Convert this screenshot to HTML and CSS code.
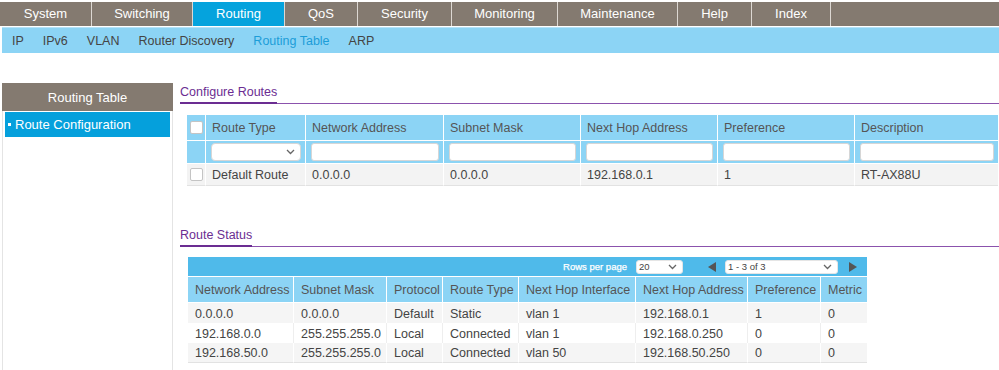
FILE: index.html
```html
<!DOCTYPE html>
<html>
<head>
<meta charset="utf-8">
<link rel="stylesheet" href="styles.css">
</head>
<body>
<div class="topnav">
  <div class="tab w-system">System</div>
  <div class="tab w-switching">Switching</div>
  <div class="tab active w-routing">Routing</div>
  <div class="tab w-qos">QoS</div>
  <div class="tab w-security">Security</div>
  <div class="tab w-monitoring">Monitoring</div>
  <div class="tab w-maint">Maintenance</div>
  <div class="tab w-help">Help</div>
  <div class="tab w-index">Index</div>
  <div class="tab rest"></div>
</div>
<div class="subnav">
  <span>IP</span><span>IPv6</span><span>VLAN</span><span>Router Discovery</span><span class="cur">Routing Table</span><span>ARP</span>
</div>
<div class="main">
  <div class="sidebar">
    <div class="side-head">Routing Table</div>
    <div class="side-item"><span class="dot"></span>Route Configuration</div>
  </div>
  <div class="content">
    <div class="sec-head"><span>Configure Routes</span></div>
    <table class="cfg">
      <colgroup>
        <col style="width:19px"><col style="width:100px"><col style="width:138px"><col style="width:137px"><col style="width:137px"><col style="width:137px"><col>
      </colgroup>
      <tr class="hd">
        <td class="cbc"><span class="cb"></span></td>
        <td>Route Type</td><td>Network Address</td><td>Subnet Mask</td><td>Next Hop Address</td><td>Preference</td><td>Description</td>
      </tr>
      <tr class="flt">
        <td></td>
        <td><div class="inp sel"><svg width="9" height="6" viewBox="0 0 9 6"><polyline points="1,1 4.5,4.5 8,1" fill="none" stroke="#666" stroke-width="1.3"/></svg></div></td>
        <td><div class="inp"></div></td><td><div class="inp"></div></td><td><div class="inp"></div></td><td><div class="inp"></div></td><td><div class="inp"></div></td>
      </tr>
      <tr class="row">
        <td class="cbc"><span class="cb"></span></td>
        <td>Default Route</td><td>0.0.0.0</td><td>0.0.0.0</td><td>192.168.0.1</td><td>1</td><td>RT-AX88U</td>
      </tr>
    </table>

    <div class="sec-head second"><span>Route Status</span></div>
    <div class="status">
      <div class="pager">
        <span class="rpp">Rows per page</span>
        <div class="psel small"><span>20</span><svg width="9" height="6" viewBox="0 0 9 6"><polyline points="1,1 4.5,4.5 8,1" fill="none" stroke="#666" stroke-width="1.3"/></svg></div>
        <svg class="arr left" width="8" height="10" viewBox="0 0 8 10"><polygon points="8,0 0,5 8,10" fill="#555"/></svg>
        <div class="psel big"><span>1 - 3 of 3</span><svg width="9" height="6" viewBox="0 0 9 6"><polyline points="1,1 4.5,4.5 8,1" fill="none" stroke="#666" stroke-width="1.3"/></svg></div>
        <svg class="arr right" width="8" height="10" viewBox="0 0 8 10"><polygon points="0,0 8,5 0,10" fill="#555"/></svg>
      </div>
      <table class="st">
        <colgroup>
          <col style="width:106px"><col style="width:93px"><col style="width:56px"><col style="width:76px"><col style="width:117px"><col style="width:112px"><col style="width:73px"><col style="width:46px">
        </colgroup>
        <tr class="hd">
          <td>Network Address</td><td>Subnet Mask</td><td>Protocol</td><td>Route Type</td><td>Next Hop Interface</td><td>Next Hop Address</td><td>Preference</td><td>Metric</td>
        </tr>
        <tr class="g"><td>0.0.0.0</td><td>0.0.0.0</td><td>Default</td><td>Static</td><td>vlan 1</td><td>192.168.0.1</td><td>1</td><td>0</td></tr>
        <tr class="w"><td>192.168.0.0</td><td>255.255.255.0</td><td>Local</td><td>Connected</td><td>vlan 1</td><td>192.168.0.250</td><td>0</td><td>0</td></tr>
        <tr class="g"><td>192.168.50.0</td><td>255.255.255.0</td><td>Local</td><td>Connected</td><td>vlan 50</td><td>192.168.50.250</td><td>0</td><td>0</td></tr>
      </table>
    </div>
  </div>
</div>
</body>
</html>
```
FILE: styles.css
```css
* { box-sizing: border-box; }
html, body { margin: 0; padding: 0; background: #fff; }
body { font-family: "Liberation Sans", Arial, Helvetica, sans-serif; font-size: 12.5px; color: #444; overflow: hidden; }

.topnav { display: flex; margin-top: 2px; height: 24px; background: #847a70; }
.tab { color: #fff; font-size: 13px; line-height: 24px; text-align: center; border-right: 1px solid #ddd8d3; }
.tab.active { background: #05a3dd; }
.tab.rest { flex: 1; border-right: none; }
.w-system { width: 92px; }
.w-switching { width: 101px; }
.w-routing { width: 92px; }
.w-qos { width: 73px; }
.w-security { width: 94px; }
.w-monitoring { width: 106px; }
.w-maint { width: 120px; }
.w-help { width: 74px; }
.w-index { width: 79px; }

.subnav { margin: 1px 0 0 2px; height: 26px; background: #8cd4f5; display: flex; align-items: center; padding-left: 10px; gap: 19px; border-top: 1px solid #b5e3f8; }
.subnav span { color: #444; font-size: 12.5px; }
.subnav span.cur { color: #1c9dd8; }

.main { display: flex; padding-top: 30px; }
.sidebar { width: 171px; margin-left: 2px; border-left: 1px solid #e4e4e4; border-right: 1px solid #e4e4e4; min-height: 300px; flex-shrink: 0; }
.side-head { margin: 0 -1px; height: 28px; background: #847a70; color: #fff; font-size: 13px; line-height: 29px; text-align: center; }
.side-item { margin: 1px 2px 0 2px; height: 25px; background: #05a0dc; color: #fff; font-size: 13px; line-height: 24px; padding-left: 3px; display: flex; align-items: center; }
.side-item .dot { width: 3px; height: 3px; background: #fff; margin-right: 4px; }

.content { flex: 1; margin-left: 7px; padding-bottom: 20px; }
.sec-head { display: flex; border-bottom: 1px solid #8b52ad; padding-top: 1px; }
.sec-head span { display: block; line-height: 17px; padding-bottom: 1px; margin-bottom: -1px; color: #6b2d92; font-size: 12.5px; border-bottom: 2px solid #6b2d92; }
.sec-head.second { margin-top: 40px; }

table { border-collapse: separate; border-spacing: 0; table-layout: fixed; }
.cfg { margin: 11px 1px 0 7px; width: 811px; }
.cfg td { padding: 0 0 0 6px; border-right: 1px solid #fff; border-bottom: 1px solid #fff; white-space: nowrap; overflow: hidden; }
.cfg td:last-child { border-right: none; }
.cfg .hd td { height: 26px; background: #8cd4f5; color: #555; }
.cfg .flt td { height: 23px; background: #8cd4f5; padding: 0 4px 0 5px; }
.cfg .row td { height: 22px; padding-top: 1px; background: #f3f3f3; border-bottom: 1px solid #e2e2e2; }
.cfg td.cbc { padding: 0 0 0 3px; }
.cb { display: block; width: 13px; height: 13px; background: #fff; border: 1px solid #c4c4c4; border-radius: 2px; }
.inp { height: 18px; background: #fff; border: 1px solid #d6d6d6; border-radius: 3px; }
.inp.sel { display: flex; align-items: center; justify-content: flex-end; padding-right: 5px; border-radius: 4px; }

.status { margin: 10px 0 0 8px; width: 679px; }
.pager { height: 20px; background: #4fbaea; display: flex; align-items: center; justify-content: flex-end; padding-right: 10px; border-bottom: 1px solid #fff; }
.rpp { color: #fff; font-size: 9.5px; margin-right: 9px; -webkit-text-stroke: 0.25px #fff; }
.psel { height: 14px; background: #fff; border-radius: 3px; border: 1px solid #e5e5e5; display: flex; align-items: center; justify-content: space-between; padding: 0 5px 0 2px; font-size: 9.5px; color: #444; }
.psel.small { width: 47px; }
.psel.big { width: 113px; }
.arr.left { margin: 0 9px 0 25px; }
.arr.right { margin-left: 11px; }
.st { width: 679px; }
.st td { padding: 0 0 0 7px; white-space: nowrap; overflow: hidden; border-right: 1px solid #fff; }
.st td:last-child { border-right: none; }
.st .hd td { height: 26px; padding-top: 1px; background: #8cd4f5; color: #555; border-bottom: 1px solid #fff; }
.st .g td { height: 20px; padding-top: 1px; background: #f5f5f5; border-right-color: #fff; }
.st .w td { height: 20px; padding-top: 1px; background: #fff; border-right-color: #eeeeee; }
.st tr:last-child td { border-bottom: 1px solid #e2e2e2; }
```
